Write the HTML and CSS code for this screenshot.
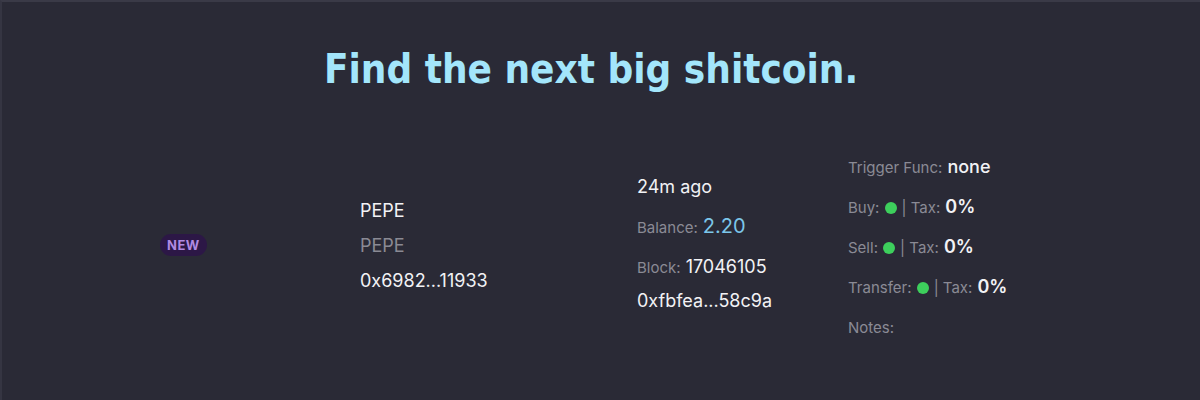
FILE: index.html
```html
<!DOCTYPE html>
<html lang="en">
<head>
    <meta charset="UTF-8">
    <meta name="viewport" content="width=device-width, initial-scale=1.0">
    <title>Shitcoin Finder</title>
    <link rel="stylesheet" href="styles.css">
</head>
<body>
    <div class="page">
        <h1 class="title">Find the next big shitcoin.</h1>

        <div class="token-row">
            <div class="col col-badge">
                <span class="badge">NEW</span>
            </div>

            <div class="col col-name">
                <div class="line">PEPE</div>
                <div class="line muted">PEPE</div>
                <div class="line">0x6982...11933</div>
            </div>

            <div class="col col-info">
                <div class="line wide">24m ago</div>
                <div class="line wide"><span class="label">Balance:</span> <span class="balance">2.20</span></div>
                <div class="line wide"><span class="label">Block:</span> 17046105</div>
                <div class="line last">0xfbfea...58c9a</div>
            </div>

            <div class="col col-checks">
                <div class="line wide"><span class="label">Trigger Func:</span> <span class="value">none</span></div>
                <div class="line wide"><span class="label">Buy:</span> <span class="dot"></span> <span class="label">| Tax:</span> <span class="strong">0%</span></div>
                <div class="line wide"><span class="label">Sell:</span> <span class="dot"></span> <span class="label">| Tax:</span> <span class="strong">0%</span></div>
                <div class="line wide"><span class="label">Transfer:</span> <span class="dot"></span> <span class="label">| Tax:</span> <span class="strong">0%</span></div>
                <div class="line wide"><span class="label">Notes:</span></div>
            </div>
        </div>
    </div>
</body>
</html>
```

FILE: styles.css
```css
body {
    margin: 0;
    padding: 0;
    background-color: #2a2a36;
    font-family: 'Inter', 'Noto Sans', sans-serif;
    color: #f2f2f5;
}

.page {
    height: 400px;
    box-sizing: border-box;
    border-top: 2px solid #3a3a47;
    border-left: 2px solid #353542;
}

.title {
    margin: 0;
    padding-top: 41px;
    padding-right: 20px;
    text-align: center;
    font-family: 'DejaVu Sans Condensed', 'DejaVu Sans', sans-serif;
    font-weight: bold;
    font-size: 40px;
    line-height: 52px;
    color: #a3e6fb;
}

.token-row {
    display: flex;
    align-items: center;
    margin-top: 52px;
    padding-left: 158px;
    height: 200px;
}

.col {
    display: flex;
    flex-direction: column;
}

.col-badge {
    width: 200px;
    align-items: flex-start;
    margin-top: -4px;
}

.col-name {
    width: 277px;
    margin-top: -4px;
}

.col-name .line {
    line-height: 35px;
}

.col-info {
    width: 211px;
    margin-top: -12px;
}

.badge {
    display: inline-block;
    background-color: #2c1746;
    color: #b08ae3;
    font-size: 13px;
    font-weight: 700;
    letter-spacing: 0.5px;
    padding: 3px 7px;
    border-radius: 11px;
    line-height: 16px;
}

.line {
    font-size: 18px;
    line-height: 34px;
    white-space: nowrap;
}

.line span {
    line-height: 1;
}

.line.wide {
    line-height: 40px;
}

.line.last {
    line-height: 28px;
}

.muted {
    color: #8a8a94;
}

.label {
    font-size: 15px;
    color: #8a8a95;
}

.balance {
    font-size: 20px;
    color: #7cc6ea;
}

.value {
    font-weight: 500;
}

.strong {
    font-weight: 600;
}

.dot {
    display: inline-block;
    width: 12px;
    height: 12px;
    border-radius: 50%;
    background-color: #3dcf5c;
    vertical-align: -1px;
}
```
